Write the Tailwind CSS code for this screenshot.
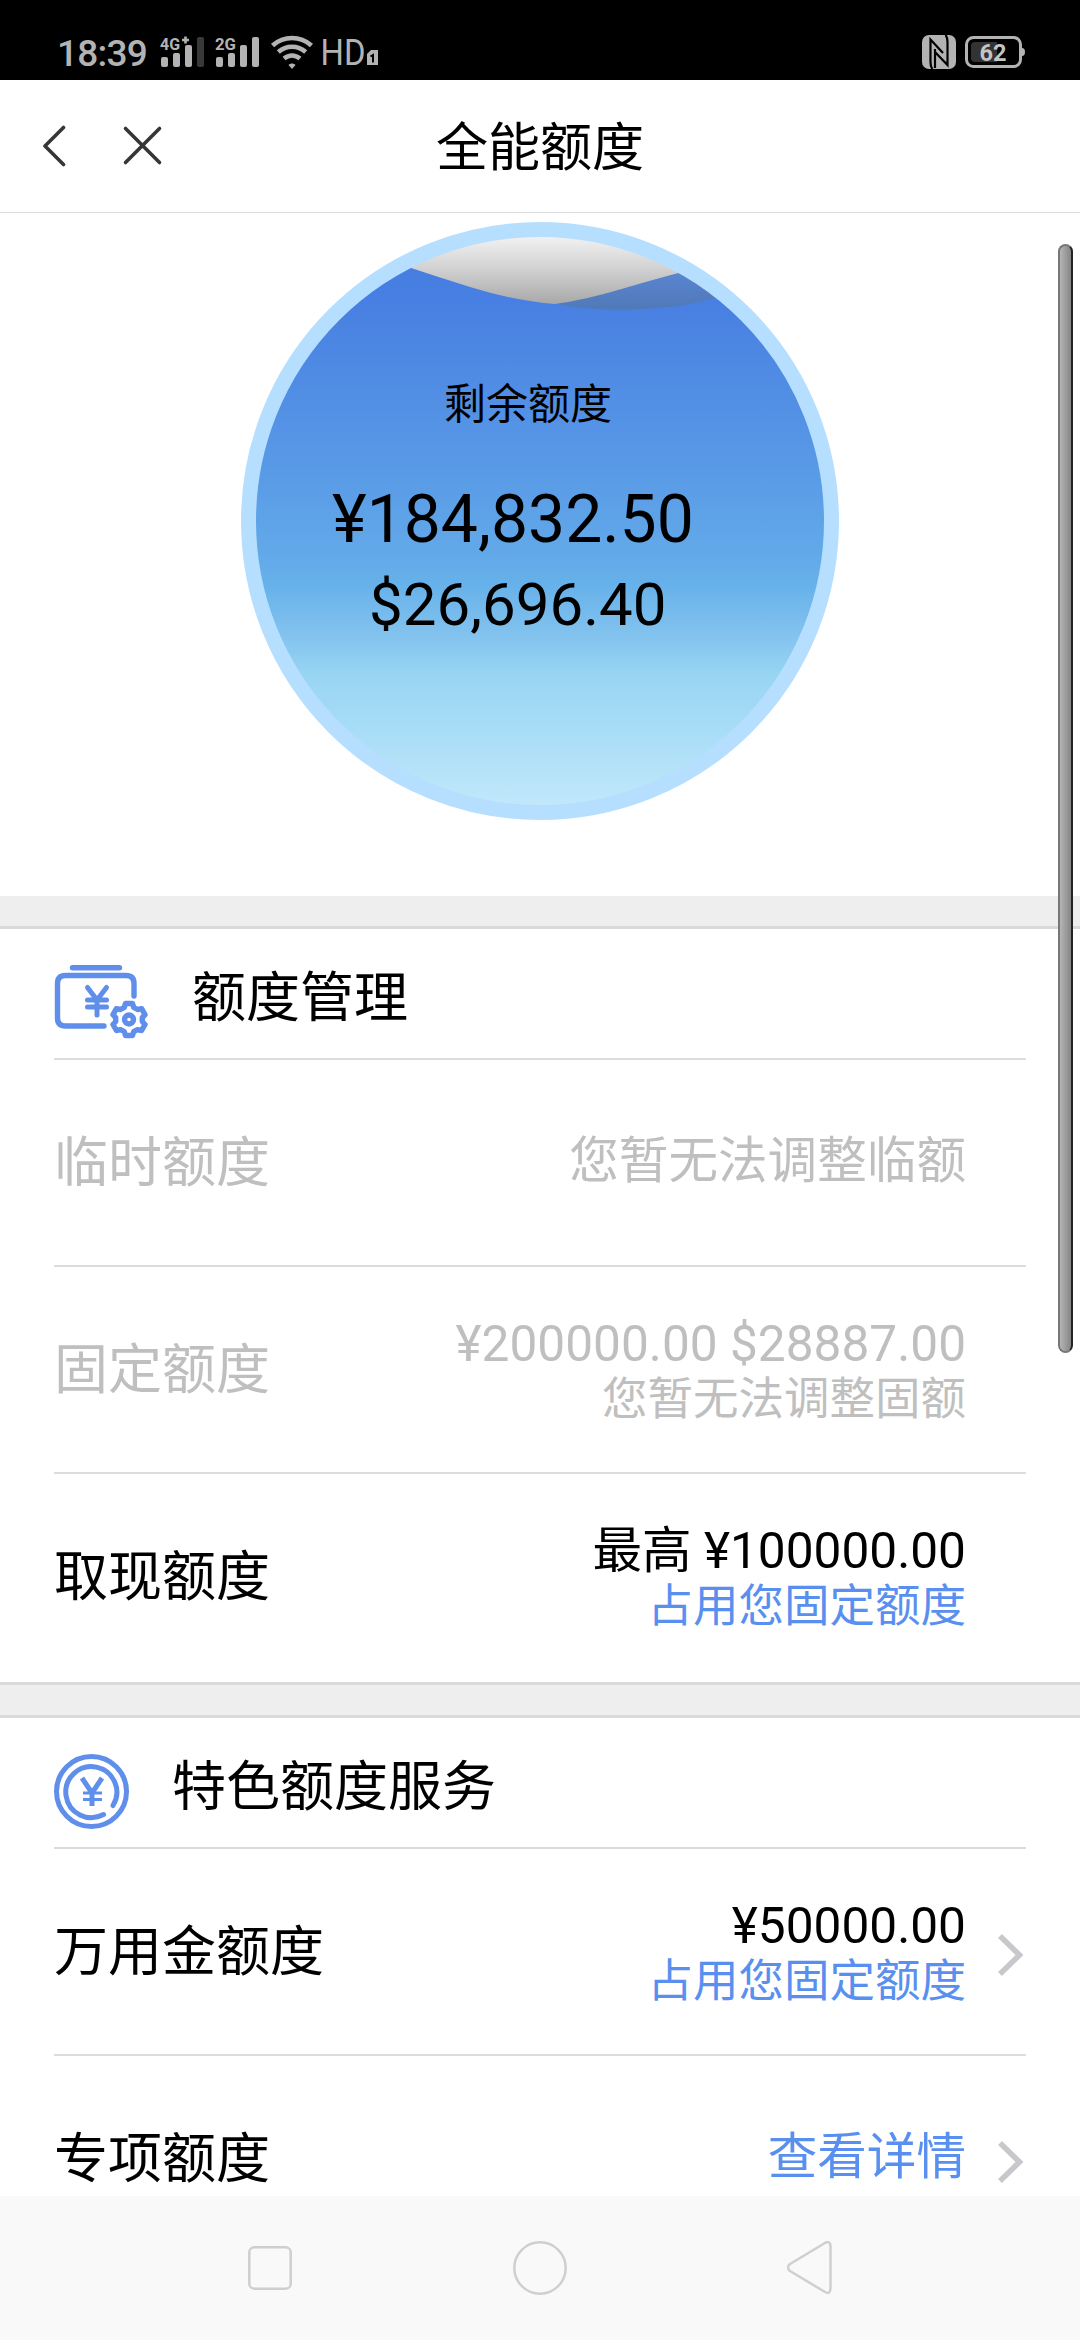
<!DOCTYPE html>
<html lang="zh-CN">
<head>
<meta charset="utf-8">
<title>全能额度</title>
<script src="https://cdn.jsdelivr.net/npm/@tailwindcss/browser@4"></script>
</head>
<body class="relative flex h-[2340px] w-[1080px] flex-col overflow-hidden bg-white font-['Roboto','Noto_Sans_CJK_SC',sans-serif] text-black">
  <!-- status bar -->
  <div class="flex h-20 shrink-0 items-start justify-between bg-black pl-[57px] pr-[55px] text-[#b3b3b3]">
    <div class="flex items-start">
      <span class="mt-[32px] w-[103px] text-[37px] font-medium leading-[44px] tracking-[-0.8px]">18:39</span>
      <svg class="mt-[36px] h-8 w-[44px] shrink-0 overflow-visible" viewBox="0 0 44 32" fill="#b3b3b3"><text x="0" y="13.500" font-size="17" font-weight="700" textLength="20" lengthAdjust="spacingAndGlyphs">4G</text><path d="M22 4h7M25.500 .5v7" stroke="#b3b3b3" stroke-width="2.600"/><rect x="1" y="21" width="7" height="10" rx="2"/><rect x="13" y="17" width="7" height="14" rx="2"/><rect x="25" y="9" width="7" height="22" rx="2"/><rect x="37" y="1" width="7" height="30" rx="2" fill="#383838"/></svg>
      <svg class="ml-[11px] mt-[36px] h-8 w-[44px] shrink-0 overflow-visible" viewBox="0 0 44 32" fill="#b3b3b3"><text x="0" y="13.500" font-size="17" font-weight="700" textLength="21" lengthAdjust="spacingAndGlyphs">2G</text><rect x="1" y="21" width="7" height="10" rx="2"/><rect x="13" y="17" width="7" height="14" rx="2"/><rect x="25" y="9" width="7" height="22" rx="2"/><rect x="37" y="1" width="7" height="30" rx="2"/></svg>
      <svg class="ml-[12px] mt-[35px] h-[35px] w-[42px] shrink-0" viewBox="0 0 42 35" fill="none" stroke="#b3b3b3" stroke-width="4.600"><path d="M1.500 10.500C13 .5 29 .5 40.500 10.500M7.300 17c8-7 19.400-7 27.400 0M13 23.500c5-4 11-4 16 0"/><path d="M17.500 30c2-2 5-2 7 0L21 34z" fill="#b3b3b3" stroke="none"/></svg>
      <svg class="ml-[9px] mt-[36px] h-8 w-[58px] shrink-0 overflow-visible" viewBox="0 0 58 32" fill="#b3b3b3"><text x="-1.500" y="29" font-size="36" textLength="45" lengthAdjust="spacingAndGlyphs">HD</text><path d="M49 14h7v15H45V18z"/><path d="M48.500 20.500l2.500-1.500v7.500" stroke="#000" stroke-width="2" fill="none"/></svg>
    </div>
    <div class="flex items-start">
      <svg class="mt-[35px] h-[34px] w-[34px]" viewBox="0 0 34 34"><rect width="34" height="34" rx="7" fill="#b3b3b3"/><path d="M10.500 34C8.500 32 8.500 30 8.500 27V4.500L21 18M13 14V17L25.500 30V7C25.500 4 25.500 2 23.500 0M13 17V33" fill="none" stroke="#000" stroke-width="2.200"/></svg>
      <svg class="ml-[9px] mt-[36px] h-8 w-[60px]" viewBox="0 0 60 32"><rect x="1.500" y="1.500" width="54" height="29" rx="7" fill="none" stroke="#b3b3b3" stroke-width="3"/><path d="M57 12q3 0 3 4t-3 4z" fill="#b3b3b3"/><path d="M10 6h22v20H10q-4 0-4-4V10q0-4 4-4z" fill="#333"/><text x="14.500" y="24.500" font-size="24" font-weight="700" fill="#c4c4c4" textLength="27" lengthAdjust="spacingAndGlyphs">62</text></svg>
    </div>
  </div>
  <!-- title bar -->
  <header class="grid h-[133px] shrink-0 grid-cols-[200px_1fr_200px] items-center border-b border-[#dcdcdc]">
    <div class="flex items-center pl-[42px]">
      <svg class="h-11 w-6" viewBox="0 0 24 44" fill="none" stroke="#363636" stroke-width="3.600" stroke-linecap="round" stroke-linejoin="round"><path d="M21.500 3.500L3 22l18.500 18.500"/></svg>
      <svg class="ml-[55px] h-11 w-11" viewBox="0 0 44 44" fill="none" stroke="#363636" stroke-width="3.600" stroke-linecap="round"><path d="M4.500 4.500l34 34M38.500 4.500l-34 34"/></svg>
    </div>
    <h1 class="pt-[5px] text-center text-[52px] leading-[60px]">全能额度</h1>
  </header>
  <!-- remaining limit -->
  <section class="h-[683px] shrink-0 pt-[9px]">
    <div class="relative mx-auto h-[598px] w-[598px]">
      <svg class="absolute inset-0 h-full w-full" viewBox="241 222 598 598">
        <defs>
          <linearGradient id="water" gradientUnits="userSpaceOnUse" x1="0" y1="237" x2="0" y2="805"><stop offset="0" stop-color="#467ce1"/><stop offset=".11" stop-color="#487fe2"/><stop offset=".4" stop-color="#5899e6"/><stop offset=".56" stop-color="#62a9e9"/><stop offset=".61" stop-color="#66b1ea"/><stop offset=".7" stop-color="#82c2ee"/><stop offset=".77" stop-color="#98d5f3"/><stop offset=".85" stop-color="#a5dbf6"/><stop offset="1" stop-color="#c1e7fa"/></linearGradient>
          <linearGradient id="glass" gradientUnits="userSpaceOnUse" x1="0" y1="237" x2="0" y2="306"><stop offset="0" stop-color="#f1f1f1"/><stop offset=".45" stop-color="#d2d2d2"/><stop offset="1" stop-color="#a6a6a6"/></linearGradient>
          <linearGradient id="back" gradientUnits="userSpaceOnUse" x1="0" y1="270" x2="0" y2="309"><stop offset="0" stop-color="#5b86d2"/><stop offset="1" stop-color="#5079b8"/></linearGradient>
          <clipPath id="disc"><circle cx="540" cy="521" r="285"/></clipPath>
        </defs>
        <g clip-path="url(#disc)">
          <rect x="241" y="222" width="598" height="598" fill="url(#water)"/>
          <path d="M555 304L679 273L740 250V290Q700 305 660 308Q605 313 555 304z" fill="url(#back)"/>
          <path d="M405 266Q438 277 470 287Q515 301 555 304Q585 300 625 288Q655 279 690 270V222H405z" fill="url(#glass)"/>
        </g>
        <circle cx="540" cy="521" r="291.500" fill="none" stroke="#b6dfff" stroke-width="15"/>
      </svg>
      <div class="relative flex flex-col items-start whitespace-nowrap pt-[153px]">
        <p class="ml-[203px] text-[42px] leading-[60px]">剩余额度</p>
        <p class="ml-[91px] mt-[45px] text-[66px] leading-[80px]">¥184,832.50</p>
        <p class="ml-[128px] mt-[9px] text-[60px] leading-[72px]">$26,696.40</p>
      </div>
    </div>
  </section>
  <!-- limit management -->
  <section class="shrink-0 border-b-[3px] border-[#d9d9d9]">
    <div class="h-[33px] border-b-[3px] border-[#d9d9d9] bg-[#eee]"></div>
    <div class="px-[54px]">
      <div class="flex h-[131px] border-b-2 border-[#dcdcdc]">
        <svg class="mt-[36px] h-[76px] w-[96px]" viewBox="0 0 96 76" fill="none" stroke="#5f8fea" stroke-width="5.400" stroke-linecap="round" stroke-linejoin="round"><path d="M18.500 2.700h47"/><path d="M50 61H11.500Q3.500 61 3.500 53V18.500Q3.500 10.500 11.500 10.500H72Q80 10.500 80 18.500V31"/><path d="M33.500 22.500L43 35 52.500 22.500M43 35v15M33.500 35h19M33.500 42h19" stroke-width="5"/><circle cx="75" cy="54.500" r="4.500"/><path d="M70.300 42.400L71.500 38.500H78.500L79.700 42.400L83.500 44.500L87.600 43.600L91 49.600L88.300 52.600V56.500L91 59.500L87.600 65.500L83.500 64.600L79.700 66.700L78.500 70.500H71.500L70.300 66.700L66.500 64.600L62.400 65.500L59 59.500L61.700 56.500V52.600L59 49.600L62.400 43.600L66.500 44.500Z"/></svg>
        <h2 class="ml-[42px] mt-[30px] text-[54px] leading-[80px]">额度管理</h2>
      </div>
      <div class="flex h-[207px] justify-between border-b-2 border-[#dcdcdc] pr-[60px] text-[#bfbfbf]">
        <span class="mt-[64px] text-[54px] leading-[80px]">临时额度</span>
        <span class="mt-[61px] text-[49.600px] leading-[80px]">您暂无法调整临额</span>
      </div>
      <div class="flex h-[207px] justify-between border-b-2 border-[#dcdcdc] pr-[60px] text-[#bfbfbf]">
        <span class="mt-[64px] text-[54px] leading-[80px]">固定额度</span>
        <div class="mt-[47px] text-right"><p class="text-[49.600px] leading-[60px]">¥200000.00 $28887.00</p><p class="-mt-[4px] text-[45.500px] leading-[60px]">您暂无法调整固额</p></div>
      </div>
      <div class="flex h-[208px] justify-between pr-[60px]">
        <span class="mt-[64px] text-[54px] leading-[80px]">取现额度</span>
        <div class="mt-[47px] text-right"><p class="text-[49.600px] leading-[60px]">最高 ¥100000.00</p><p class="-mt-[4px] text-[45.500px] leading-[60px] text-[#5990ef]">占用您固定额度</p></div>
      </div>
    </div>
  </section>
  <!-- special services -->
  <section class="min-h-0 flex-1 overflow-hidden">
    <div class="h-[33px] border-b-[3px] border-[#d9d9d9] bg-[#eee]"></div>
    <div class="px-[54px]">
      <div class="flex h-[131px] border-b-2 border-[#dcdcdc]">
        <svg class="mt-[36px] h-[75px] w-[75px]" viewBox="0 0 75 75" fill="none" stroke="#5f8fea" stroke-width="5" stroke-linecap="round"><circle cx="37.500" cy="37.500" r="35"/><path d="M59 51.500A25.500 25.500 0 1 0 49.500 60.500"/><path d="M28 24L38 39 48 24M38 39V52" stroke-width="5" stroke-linecap="butt"/><path d="M29 39H48M29 45.500H48" stroke-width="3" stroke-linecap="butt"/></svg>
        <h2 class="ml-[43px] mt-[30px] text-[54px] leading-[80px]">特色额度服务</h2>
      </div>
      <div class="flex h-[207px] border-b-2 border-[#dcdcdc]">
        <span class="mt-[64px] flex-1 text-[54px] leading-[80px]">万用金额度</span>
        <div class="mt-[47px] text-right"><p class="text-[49.600px] leading-[60px]">¥50000.00</p><p class="-mt-[4px] text-[45.500px] leading-[60px] text-[#5990ef]">占用您固定额度</p></div>
        <svg class="ml-[31px] mr-[2px] mt-[84px] h-11 w-[27px]" viewBox="0 0 27 44" fill="none" stroke="#c7c7cc" stroke-width="5.500"><path d="M3 3l19.500 19L3 41"/></svg>
      </div>
      <div class="flex h-[207px]">
        <span class="mt-[64px] flex-1 text-[54px] leading-[80px]">专项额度</span>
        <span class="mt-[61px] text-[49.600px] leading-[80px] text-[#5990ef]">查看详情</span>
        <svg class="ml-[31px] mr-[2px] mt-[84px] h-11 w-[27px]" viewBox="0 0 27 44" fill="none" stroke="#c7c7cc" stroke-width="5.500"><path d="M3 3l19.500 19L3 41"/></svg>
      </div>
    </div>
  </section>
  <!-- system navigation -->
  <nav class="flex h-36 shrink-0 items-center justify-between bg-[#f9f9f9] px-[248px]">
    <svg class="h-11 w-11" viewBox="0 0 44 44" fill="none" stroke="#cfcfcf" stroke-width="2.500"><rect x="1.300" y="1.300" width="41.400" height="41.400" rx="5"/></svg>
    <svg class="h-[54px] w-[54px]" viewBox="0 0 54 54" fill="none" stroke="#cfcfcf" stroke-width="2.500"><circle cx="27" cy="27" r="25.700"/></svg>
    <svg class="h-[54px] w-[45px]" viewBox="0 0 45 54" fill="none" stroke="#cfcfcf" stroke-width="2.500" stroke-linejoin="round"><path d="M43.500 6V47Q43.500 54 38 51L3 30Q-1 26.500 3 23L38 2Q43.500 -1 43.500 6z"/></svg>
  </nav>
  <!-- scroll thumb -->
  <div class="absolute left-[1058px] top-[244px] h-[1109px] w-[15px] rounded-full border-2 border-[#777] border-r-[#222] bg-linear-to-r from-[#b5b5b5] to-[#858585]"></div>
</body>
</html>
